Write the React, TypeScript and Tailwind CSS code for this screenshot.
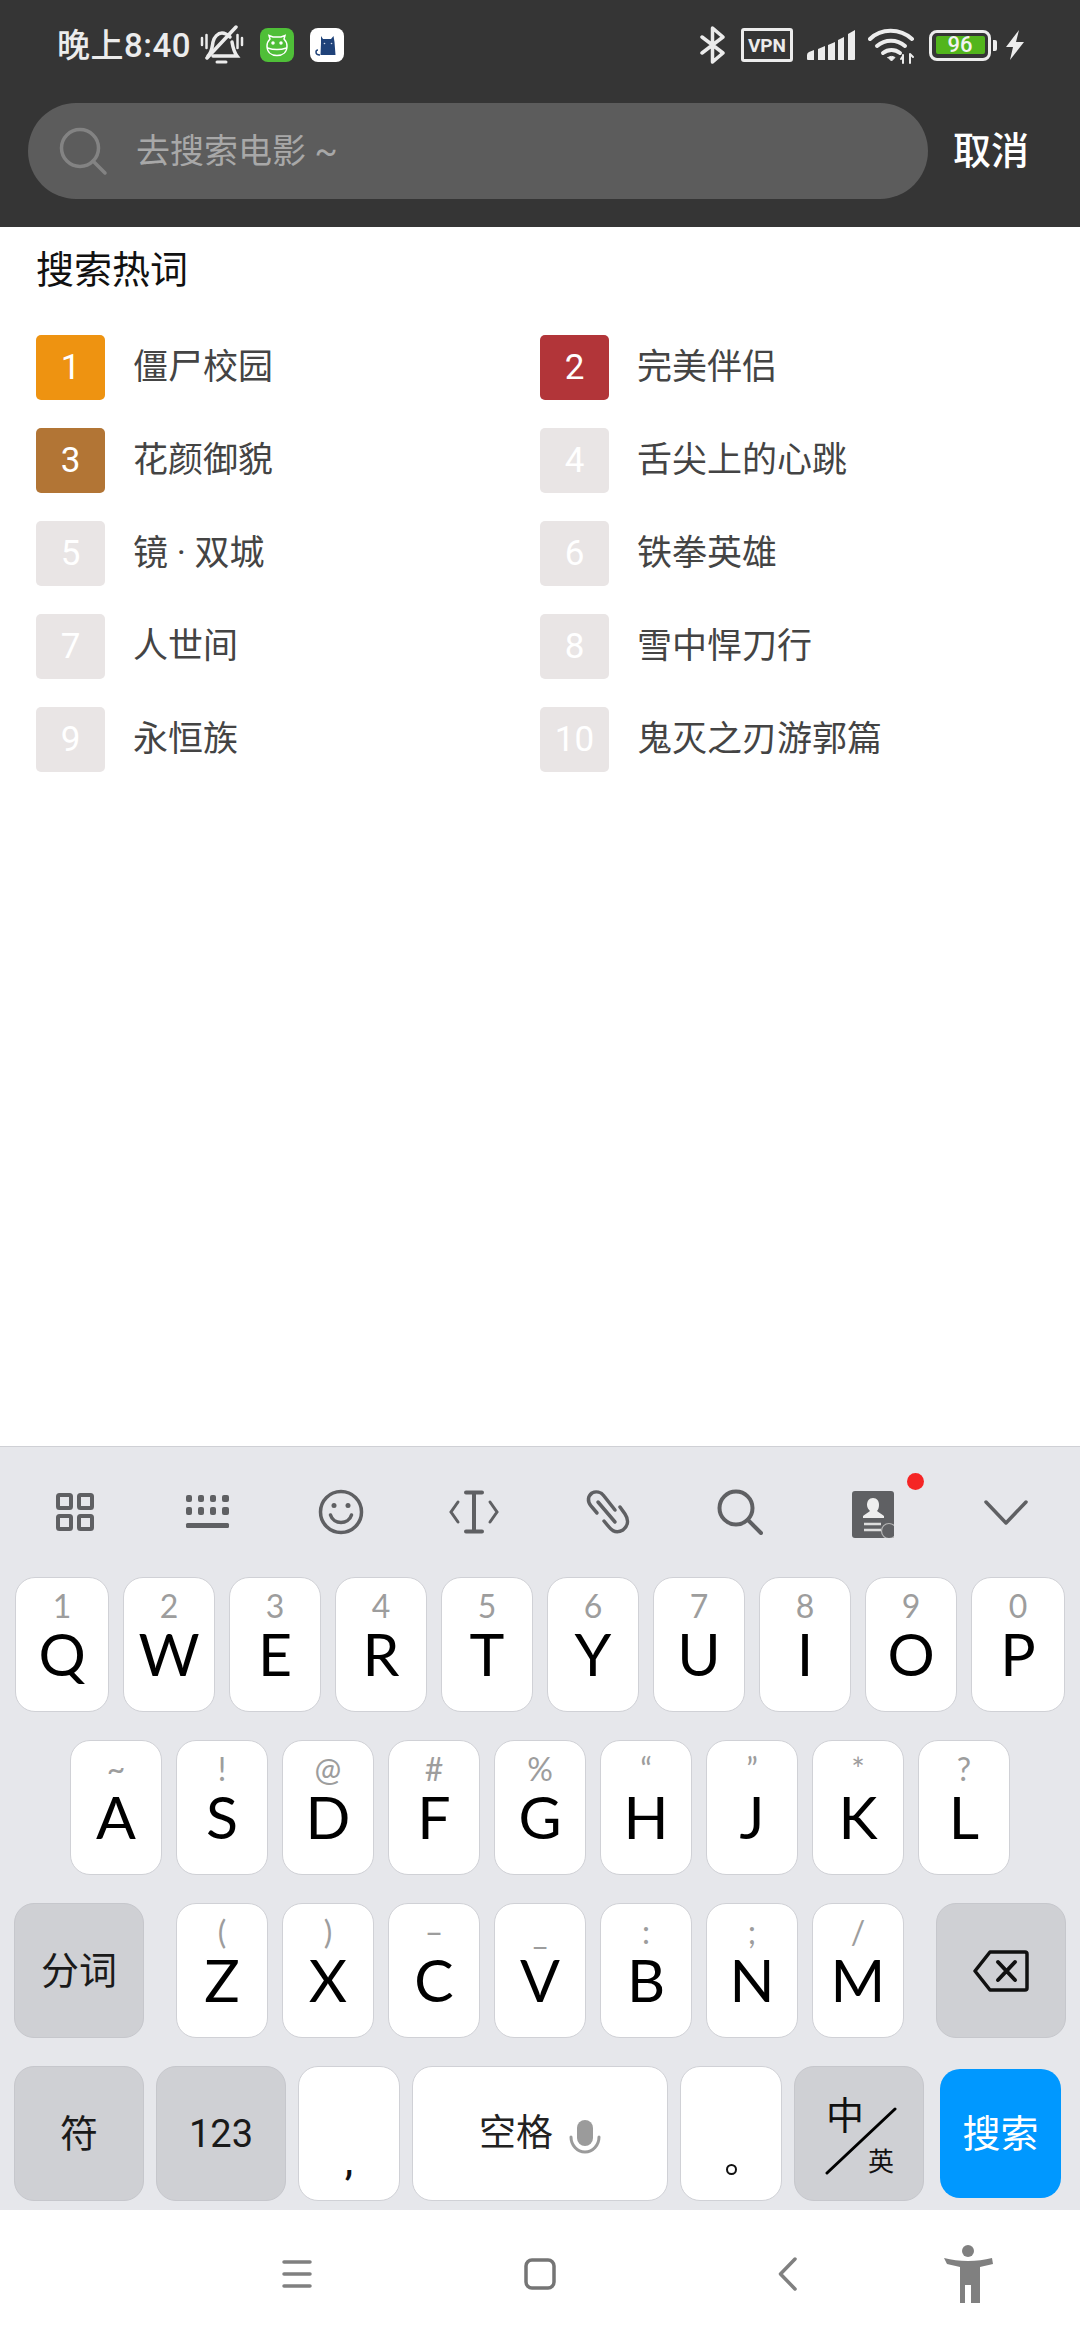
const CJK = 'font-["Roboto","Noto_Sans_CJK_SC",sans-serif]';

const hotWords = [
  { rank: 1, title: '僵尸校园', color: 'bg-[#ee9311]' },
  { rank: 2, title: '完美伴侣', color: 'bg-[#b23539]' },
  { rank: 3, title: '花颜御貌', color: 'bg-[#b27535]' },
  { rank: 4, title: '舌尖上的心跳', color: 'bg-[#e9e5e5]' },
  { rank: 5, title: '镜 · 双城', color: 'bg-[#e9e5e5]' },
  { rank: 6, title: '铁拳英雄', color: 'bg-[#e9e5e5]' },
  { rank: 7, title: '人世间', color: 'bg-[#e9e5e5]' },
  { rank: 8, title: '雪中悍刀行', color: 'bg-[#e9e5e5]' },
  { rank: 9, title: '永恒族', color: 'bg-[#e9e5e5]' },
  { rank: 10, title: '鬼灭之刃游郭篇', color: 'bg-[#e9e5e5]' },
];

const row1 = [
  ['Q', '1'], ['W', '2'], ['E', '3'], ['R', '4'], ['T', '5'],
  ['Y', '6'], ['U', '7'], ['I', '8'], ['O', '9'], ['P', '0'],
];
const row2 = [
  ['A', '~'], ['S', '!'], ['D', '@'], ['F', '#'], ['G', '%'],
  ['H', '“'], ['J', '”'], ['K', '*'], ['L', '?'],
];
const row3 = [
  ['Z', '('], ['X', ')'], ['C', '–'], ['V', '_'], ['B', ':'], ['N', ';'], ['M', '/'],
];

function StatusBar() {
  return (
    <div className="h-[90px] flex items-center pl-[57px] text-[#ececec]">
      <span className="text-[33px] leading-none tracking-[0.5px] font-medium">晚上8:40</span>
      {/* muted bell */}
      <svg className="ml-[9px]" width="44" height="40" viewBox="0 0 44 40" fill="none" stroke="#ececec" strokeLinecap="round">
        <path d="M2 13v7M6.500 10v13M37.500 10v13M42 13v7" strokeWidth="2.500" />
        <path d="M8 31c4-4 4-8 5-14 1-5 5-9 9-9 3 0 6 2 8 4M32 17c1 6 2 10 5 14H13" strokeWidth="3.500" />
        <path d="M36 2 7 33" strokeWidth="3.500" />
        <path d="M17 37h9" strokeWidth="3" />
      </svg>
      {/* app notification icons */}
      <div className="ml-[16px] w-[34px] h-[34px] rounded-[8px] bg-[#4fbf38] flex items-center justify-center">
        <svg width="22" height="24" viewBox="0 0 22 24" fill="none" stroke="#fff" strokeWidth="1.500">
          <path d="M4 6 3 2.500l4 1.500h8l4-1.500L18 6c2 2 3 4 3 7 0 6-4 9.500-10 9.500S1 19 1 13c0-3 1-5 3-7Z" />
          <path d="M1.500 15c6 2 13 2 19 0" />
          <circle cx="7" cy="10" r="1" fill="#fff" />
          <circle cx="15" cy="10" r="1" fill="#fff" />
        </svg>
      </div>
      <div className="ml-[16px] w-[34px] h-[34px] rounded-[8px] bg-white flex items-center justify-center">
        <svg width="28" height="28" viewBox="0 0 28 28">
          <path d="M8 5 10 8h8l2.500-3 1 6 1 13H7.500l.5-12Z" fill="#1f4279" />
          <path d="M7 24c-3 0-4-1-4-3 0-1 1-2 2-2" fill="none" stroke="#1f4279" strokeWidth="1.500" />
          <circle cx="11.500" cy="12.500" r=".8" fill="#cfd8e6" />
          <circle cx="18.500" cy="12.500" r=".8" fill="#cfd8e6" />
        </svg>
      </div>

      <div className="ml-auto flex items-center">
        {/* bluetooth */}
        <svg width="26" height="40" viewBox="0 0 26 40" fill="none" stroke="#ececec" strokeWidth="3.500" strokeLinecap="round" strokeLinejoin="round">
          <path d="M2 12 23 28 12.500 37V3L23 12 2 28" />
        </svg>
        <div className="ml-[15px] w-[52px] h-[34px] border-[3px] border-[#ececec] rounded-[3px] flex items-center justify-center text-[19px] leading-none font-bold tracking-[0px]">
          VPN
        </div>
        {/* signal */}
        <svg className="ml-[14px]" width="48" height="32" viewBox="0 0 48 32" fill="#ececec">
          <path d="M0 26q0-2 2-3l5-2v10H1q-1 0-1-1Z" />
          <path d="M11 20l7-3v14h-7Z" />
          <path d="M21 16l7-3v18h-7Z" />
          <path d="M31 11l6-3v23h-6Z" />
          <path d="M41 5l7-4v29q0 1-1 1h-6Z" />
        </svg>
        {/* wifi */}
        <svg className="ml-[13px]" width="48" height="38" viewBox="0 0 48 38" fill="none" stroke="#ececec" strokeWidth="4" strokeLinecap="round">
          <path d="M2 13C13 2 32 2 44 13" />
          <path d="M9 20c8-7 20-7 28 0" />
          <path d="M15 27c5-4 12-4 17 0" />
          <path d="M20 31.500 23.500 35l3.500-3.500c-2-1.500-5-1.500-7 0Z" fill="#ececec" strokeWidth="1" />
          <path d="M35 37v-8M33 33l2-3M42 37v-9M42 28l3 3" strokeWidth="2" />
        </svg>
        {/* battery */}
        <div className="ml-[13px] w-[62px] h-[31px] border-[3.5px] border-[#ececec] rounded-[8px] p-[3.5px] flex">
          <div className="flex-1 bg-[#52b51c] rounded-[2px] flex items-center justify-center text-[22px] leading-none font-medium text-[#f2f2f2]">
            96
          </div>
        </div>
        <div className="ml-[2px] w-[4px] h-[11px] bg-[#ececec] rounded-r-[2px]" />
        <svg className="ml-[8px] mr-[55px]" width="20" height="30" viewBox="0 0 20 30" fill="#ececec">
          <path d="M14 0 1 17h7L5 30l14-18h-8Z" />
        </svg>
      </div>
    </div>
  );
}

function SearchRow() {
  return (
    <div className="mt-[13px] pl-[28px] flex items-center">
      <div className="w-[900px] h-[96px] rounded-full bg-[#5c5c5c] flex items-center pl-[30px]">
        <svg width="50" height="50" viewBox="0 0 50 50" fill="none" stroke="#838383" strokeWidth="3.500" strokeLinecap="round">
          <circle cx="22" cy="22" r="18.500" />
          <path d="M35 35 47 47" />
        </svg>
        <span className="ml-[28px] text-[34px] leading-none text-[#a8a8a8]">去搜索电影 ~</span>
      </div>
      <span className="ml-[25px] text-[38px] leading-none font-medium text-white">取消</span>
    </div>
  );
}

function HotList() {
  return (
    <div className="pl-[36px] pt-[21px]">
      <div className="text-[38px] leading-[44px] text-[#111]">搜索热词</div>
      <div className="mt-[43px] grid grid-cols-[504px_1fr] gap-y-[28px]">
        {hotWords.map((item) => (
          <div key={item.rank} className="flex items-center h-[65px]">
            <div className={`w-[69px] h-[65px] rounded-[5px] ${item.color} flex items-center justify-center text-[35px] leading-none text-white`}>
              {item.rank}
            </div>
            <span className="ml-[28px] text-[35px] leading-none text-[#444]">{item.title}</span>
          </div>
        ))}
      </div>
    </div>
  );
}

function Toolbar() {
  return (
    <div className="h-[130px] grid grid-cols-8 px-[8px] items-center">
      <div className="flex justify-center">
        <svg width="38" height="38" viewBox="0 0 38 38" fill="none" stroke="#5f6063" strokeWidth="4">
          <rect x="2" y="2" width="13" height="13" rx="1.500" />
          <rect x="23" y="2" width="13" height="13" rx="1.500" />
          <rect x="2" y="23" width="13" height="13" rx="1.500" />
          <rect x="23" y="23" width="13" height="13" rx="1.500" />
        </svg>
      </div>
      <div className="flex justify-center">
        <svg width="46" height="34" viewBox="0 0 46 34" fill="#5f6063">
          <rect x="1" y="0" width="6" height="7" rx="2" />
          <rect x="13" y="0" width="6" height="7" rx="2" />
          <rect x="25" y="0" width="6" height="7" rx="2" />
          <rect x="37" y="0" width="7" height="7" rx="2" />
          <rect x="1" y="12" width="6" height="8" rx="2" />
          <rect x="13" y="12" width="6" height="8" rx="2" />
          <rect x="25" y="12" width="6" height="8" rx="2" />
          <rect x="37" y="12" width="7" height="8" rx="2" />
          <rect x="1" y="28" width="43" height="5" rx="1.500" />
        </svg>
      </div>
      <div className="flex justify-center">
        <svg width="46" height="46" viewBox="0 0 46 46" fill="none" stroke="#5f6063" strokeWidth="3.500" strokeLinecap="round">
          <circle cx="23" cy="23" r="20.500" />
          <path d="M12.500 26c3 10 18 10 21 0" />
          <circle cx="16" cy="16.500" r="2.500" fill="#5f6063" stroke="none" />
          <circle cx="30" cy="16.500" r="2.500" fill="#5f6063" stroke="none" />
        </svg>
      </div>
      <div className="flex justify-center">
        <svg width="50" height="44" viewBox="0 0 50 44" fill="none" stroke="#5f6063" strokeWidth="3" strokeLinecap="round">
          <path d="M25 3v38" strokeWidth="4" />
          <path d="M17 2.500h16M17 41.500h16" strokeWidth="4" />
          <path d="M9 12 2 22l7 10M41 12l7 10-7 10" />
        </svg>
      </div>
      <div className="flex justify-center">
        <svg width="46" height="46" viewBox="0 0 46 46" fill="none" stroke="#5f6063" strokeWidth="3.500" strokeLinecap="round">
          <path d="M13 24 7 17c-4-5-3-10 1-13 4-2 9-1 12 3l11 14" />
          <path d="M14 13l17 20" />
          <path d="M36 18l5 7c4 6 3 12-2 16-5 3-10 2-14-3l-5-6" />
        </svg>
      </div>
      <div className="flex justify-center">
        <svg width="46" height="46" viewBox="0 0 46 46" fill="none" stroke="#5f6063" strokeWidth="4" strokeLinecap="round">
          <circle cx="19" cy="19" r="16.500" />
          <path d="M31 31 44 44" />
        </svg>
      </div>
      <div className="flex justify-center">
        <div className="relative w-[42px] h-[47px] mt-[4px] rounded-[3px] bg-[#5f6063]">
          <svg className="absolute left-0 top-0" width="42" height="47" viewBox="0 0 42 47">
            <path d="M21 7c4 0 6 3 6 7 0 3-1 5-2 6 2 2 5 3 7 5v2H11v-2c2-2 5-3 7-5-1-1-3-3-3-6 0-4 2-7 6-7Z" fill="#eee" />
            <path d="M12 33h17M12 39h17" stroke="#ddd" strokeWidth="2.500" />
            <circle cx="37" cy="40" r="7.500" fill="#5f6063" stroke="#b5b5b5" strokeWidth="1.200" />
          </svg>
          <div className="absolute right-[-30px] top-[-18px] w-[17px] h-[17px] rounded-full bg-[#f52525]" />
        </div>
      </div>
      <div className="flex justify-center">
        <svg width="44" height="26" viewBox="0 0 44 26" fill="none" stroke="#5f6063" strokeWidth="3.500" strokeLinecap="round" strokeLinejoin="round">
          <path d="M2 3 22 24 42 3" />
        </svg>
      </div>
    </div>
  );
}

function LetterKey({ letter, hint, wide }: { letter: string; hint: string; wide?: boolean }) {
  return (
    <div className={`${wide ? 'w-[94px]' : 'w-[92px]'} h-[135px] bg-white border border-[#d0d1d6] rounded-[20px] flex flex-col items-center pt-[10px] font-['Lato',sans-serif]`}>
      <span className="h-[36px] text-[32px] leading-[36px] text-[#9d9d9d]">{hint}</span>
      <span className="text-[59px] leading-[60px] text-black">{letter}</span>
    </div>
  );
}

function GrayKey({ children, className = 'w-[130px]' }: { children: React.ReactNode; className?: string }) {
  return (
    <div className={`${className} h-[135px] bg-[#cfd0d4] border border-[#c6c7cc] rounded-[20px] flex items-center justify-center text-[#1a1a1a]`}>
      {children}
    </div>
  );
}

function Keyboard() {
  return (
    <div className="h-[764px] bg-[#e6e7eb] border-t border-[#cfd0d5] flex flex-col">
      <Toolbar />
      <div className="flex flex-col gap-[28px]">
        <div className="flex justify-center gap-[14px]">
          {row1.map(([l, h], i) => (
            <LetterKey key={l} letter={l} hint={h} wide={i === 0 || i === 9} />
          ))}
        </div>
        <div className="flex justify-center gap-[14px]">
          {row2.map(([l, h]) => (
            <LetterKey key={l} letter={l} hint={h} />
          ))}
        </div>
        <div className="flex px-[14px] justify-between">
          <GrayKey>
            <span className="text-[38px] leading-none">分词</span>
          </GrayKey>
          <div className="flex gap-[14px]">
            {row3.map(([l, h]) => (
              <LetterKey key={l} letter={l} hint={h} />
            ))}
          </div>
          <GrayKey>
            <svg width="56" height="42" viewBox="0 0 56 42" fill="none" stroke="#111" strokeWidth="3.500" strokeLinejoin="round" strokeLinecap="round">
              <path d="M17 2h35q2 0 2 2v34q0 2-2 2H17L2 21Z" />
              <path d="M25 12l17 18M42 12 25 30" strokeWidth="4" />
            </svg>
          </GrayKey>
        </div>
        <div className="flex pl-[14px] gap-[12px] items-center">
          <GrayKey>
            <span className="text-[38px] leading-none">符</span>
          </GrayKey>
          <GrayKey>
            <span className="text-[38px] leading-none">123</span>
          </GrayKey>
          <div className="w-[102px] h-[135px] bg-white border border-[#d0d1d6] rounded-[20px] flex justify-center items-end pb-[20px] text-[38px] leading-[38px] font-medium text-[#111]">
            ,
          </div>
          <div className="w-[256px] h-[135px] bg-white border border-[#d0d1d6] rounded-[20px] flex items-center justify-center text-[37px] leading-none text-[#222]">
            <span>空格</span>
            <svg className="ml-[16px] mt-[6px]" width="32" height="34" viewBox="0 0 32 34" fill="none">
              <rect x="8" y="0" width="16" height="26" rx="8" fill="#9b9b9b" />
              <path d="M2 17c0 8 6 15 14 15s14-7 14-15" stroke="#9b9b9b" strokeWidth="3" strokeLinecap="round" />
            </svg>
          </div>
          <div className="w-[102px] h-[135px] bg-white border border-[#d0d1d6] rounded-[20px] flex justify-center items-end pb-[25px]">
            <div className="w-[11px] h-[11px] rounded-full border-[2.500px] border-[#111]" />
          </div>
          <GrayKey className="w-[130px] relative">
            <span className="absolute left-[31px] top-[30px] text-[38px] leading-none text-[#111]">中</span>
            <span className="absolute left-[73px] top-[82px] text-[26px] leading-none text-[#111]">英</span>
            <svg className="absolute left-[30px] top-[40px]" width="72" height="68" viewBox="0 0 72 68" stroke="#000" strokeWidth="3" strokeLinecap="round">
              <path d="M2 66 70 2" />
            </svg>
          </GrayKey>
          <div className="ml-[4px] w-[121px] h-[129px] bg-[#0098ff] rounded-[20px] flex items-center justify-center text-[38px] leading-none text-white">
            搜索
          </div>
        </div>
      </div>
    </div>
  );
}

function NavBar() {
  return (
    <div className="flex-1 bg-white flex items-center pl-[282px] pb-[2px]">
      <svg width="30" height="30" viewBox="0 0 30 30" stroke="#808080" strokeWidth="3.500" strokeLinecap="round">
        <path d="M2 3h26M2 15h26M2 27h26" />
      </svg>
      <svg className="ml-[212px]" width="32" height="32" viewBox="0 0 32 32" fill="none" stroke="#757575" strokeWidth="3.500">
        <rect x="2" y="2" width="28" height="28" rx="6" />
      </svg>
      <svg className="ml-[222px]" width="20" height="34" viewBox="0 0 20 34" fill="none" stroke="#808080" strokeWidth="3.500" strokeLinecap="round" strokeLinejoin="round">
        <path d="M17 2 2.500 17 17 32" />
      </svg>
      <svg className="ml-[145px]" width="50" height="58" viewBox="0 0 50 58" fill="#808080">
        <circle cx="25" cy="6" r="6" />
        <path d="M1 13c8 2 15 3 24 3s16-1 24-3l1 6c-4 1-9 2-13 3v36H28V40h-6v18H17V22c-4-1-9-2-13-3Z" />
      </svg>
    </div>
  );
}

export default function App() {
  return (
    <div className={`w-[1080px] h-[2340px] flex flex-col bg-white overflow-hidden ${CJK}`}>
      <div className="h-[227px] bg-[#353535]">
        <StatusBar />
        <SearchRow />
      </div>
      <div className="h-[1219px]">
        <HotList />
      </div>
      <Keyboard />
      <NavBar />
    </div>
  );
}
